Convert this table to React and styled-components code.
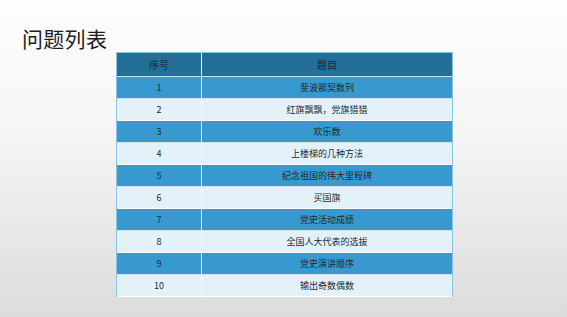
import React from "react";
import styled, { createGlobalStyle } from "styled-components";

const Global = createGlobalStyle`
  html, body { margin: 0; padding: 0; }
  body { font-family: "Noto Sans CJK SC", "Liberation Sans", sans-serif; }
`;

const Page = styled.div`
  width: 567px;
  height: 317px;
  box-sizing: border-box;
  background: linear-gradient(to bottom, #fdfdfd 0%, #f6f6f6 40%, #dcdcdc 100%);
  padding: 23px 0 0 22px;
  overflow: hidden;
`;

const Title = styled.h1`
  margin: 0;
  font-family: "Noto Sans CJK SC", sans-serif;
  font-size: 21px;
  font-weight: 400;
  line-height: 30px;
  color: #1e1e1e;
  letter-spacing: 0.3px;
`;

const Table = styled.div`
  margin: -1px 0 0 94px;
  width: 337px;
  display: grid;
  grid-template-columns: 85px 1fr;
  border-left: 1px solid #8cc3e0;
  border-right: 1px solid #8cc3e0;
  border-top: 1px solid #8cc3e0;
  box-sizing: border-box;
`;

const Cell = styled.div`
  height: ${(p) => (p.$head ? 23 : 21)}px;
  border-bottom: 1px solid ${(p) => (p.$tone === "light" ? "#ffffff" : "#c9e4f3")};
  border-right: ${(p) => (p.$first ? "1px solid #f4fbff" : "none")};
  background: ${(p) =>
    p.$tone === "head" ? "#246f97" : p.$tone === "mid" ? "#3899cf" : "#e3f1f9"};
  color: ${(p) => (p.$tone === "head" ? "#17364a" : "#1f2a30")};
  display: flex;
  align-items: center;
  justify-content: center;
  font-family: "Noto Sans CJK SC", "Liberation Sans", sans-serif;
  font-size: ${(p) => (p.$head ? 10 : 9)}px;
  line-height: 1;
  font-weight: ${(p) => (p.$head ? 500 : 400)};
`;

const rows = [
  "斐波那契数列",
  "红旗飘飘，党旗猎猎",
  "欢乐数",
  "上楼梯的几种方法",
  "纪念祖国的伟大里程碑",
  "买国旗",
  "党史活动成绩",
  "全国人大代表的选拔",
  "党史演讲顺序",
  "输出奇数偶数",
];

export default function App() {
  return (
    <>
      <Global />
      <Page>
        <Title>问题列表</Title>
        <Table>
          <Cell $head $first $tone="head">序号</Cell>
          <Cell $head $tone="head">题目</Cell>
          {rows.map((t, i) => {
            const tone = i % 2 === 0 ? "mid" : "light";
            return (
              <React.Fragment key={i}>
                <Cell $first $tone={tone}>{i + 1}</Cell>
                <Cell $tone={tone}>{t}</Cell>
              </React.Fragment>
            );
          })}
        </Table>
      </Page>
    </>
  );
}
